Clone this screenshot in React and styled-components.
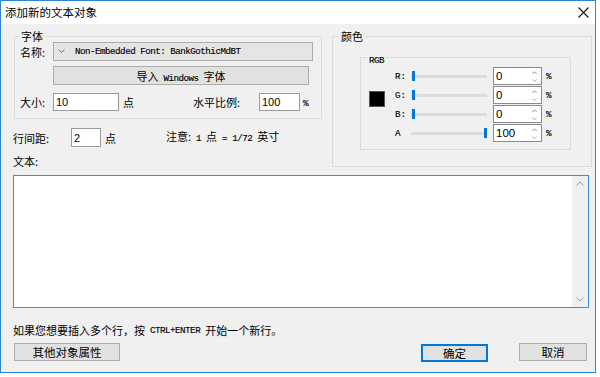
import React from 'react'
import styled, { createGlobalStyle } from 'styled-components'

const GlobalStyle = createGlobalStyle`
  html, body { margin: 0; padding: 0; background: #fff; }
  body {
    width: 600px; height: 377px; overflow: hidden;
    font-family: "Noto Sans CJK SC", "Liberation Sans", sans-serif;
    font-size: 11px; color: #000;
  }
`

const Window = styled.div`
  width: 596px;
  height: 373px;
  box-sizing: border-box;
  border: 1px solid #2c86d6;
  display: flex;
  flex-direction: column;
  background: #f0f0f0;
`
const TitleBar = styled.div`
  height: 23px;
  flex-shrink: 0;
  background: #fff;
  display: flex;
  align-items: center;
  justify-content: space-between;
  padding: 0 6px 1px 4px;
  box-sizing: border-box;
  font-size: 11.5px;
`
const Body = styled.div`
  flex: 1;
  padding: 6px 2px 0 12px;
  display: flex;
  flex-direction: column;
`
const Top = styled.div`
  display: flex;
  align-items: flex-start;
`
const LeftCol = styled.div`
  width: 309px;
  display: flex;
  flex-direction: column;
`
const Group = styled.div`
  position: relative;
  box-sizing: border-box;
  border: 1px solid #dcdcdc;
  margin-top: 6px;
  width: ${p => p.$w}px;
  height: ${p => p.$h}px;
  margin-left: ${p => p.$ml || 0}px;
  padding: ${p => p.$pad};
`
const Legend = styled.span`
  position: absolute;
  top: ${p => p.$mono ? -7 : -8}px;
  left: ${p => p.$left || 5}px;
  padding: 0 1px;
  background: #f0f0f0;
  line-height: 14px;
`
const Row = styled.div`
  display: flex;
  align-items: center;
  height: ${p => p.$h || 19}px;
  margin-top: ${p => p.$mt || 0}px;
  padding-left: ${p => p.$pl || 0}px;
`
const Label = styled.span`
  width: ${p => p.$w}px;
  margin-left: ${p => p.$ml || 0}px;
  flex-shrink: 0;
  line-height: 14px;
`
const Unit = styled.span`
  margin-left: ${p => p.$ml || 4}px;
  line-height: 14px;
  white-space: pre;
`
const Mono = styled.span`
  font-family: "Liberation Mono", "Courier New", monospace;
  font-size: 9.2px;
  letter-spacing: -0.5px;
  white-space: pre;
  -webkit-text-stroke: 0.15px #000;
`
const Cjk = styled.span`
  font-family: "Noto Sans CJK SC", sans-serif;
  font-size: 11px;
  letter-spacing: 0;
  -webkit-text-stroke: 0;
`
const Gap = styled.span`
  display: inline-block;
  width: ${p => p.$w}px;
`
const Select = styled.div`
  flex: 1;
  height: 19px;
  box-sizing: border-box;
  border: 1px solid #acacac;
  background: #e5e5e5;
  display: flex;
  align-items: center;
  padding-left: 4px;
  gap: 10px;
`
const Button = styled.div`
  width: ${p => p.$w}px;
  height: ${p => p.$h || 18}px;
  margin-left: ${p => p.$ml || 0}px;
  margin-top: ${p => p.$mt || 0}px;
  box-sizing: border-box;
  border: 1px solid ${p => p.$primary ? '#0078d7' : '#adadad'};
  box-shadow: ${p => p.$primary ? 'inset 0 0 0 1px #0078d7' : 'none'};
  background: #e1e1e1;
  display: flex;
  align-items: center;
  justify-content: center;
  font-size: 11.5px;
  flex-shrink: 0;
`
const Input = styled.div`
  width: ${p => p.$w}px;
  height: ${p => p.$h || 18}px;
  box-sizing: border-box;
  border: 1px solid #9a9a9a;
  background: #fff;
  padding-left: 2px;
  display: flex;
  align-items: center;
  font-family: "Liberation Sans", sans-serif;
  font-size: 11px;
  flex-shrink: 0;
`
const RgbBox = styled.div`
  position: relative;
  box-sizing: border-box;
  width: 211px;
  height: 93px;
  border: 1px solid #dcdcdc;
  padding: 9px 0 0 8px;
  display: flex;
`
const Swatch = styled.div`
  width: 16px;
  height: 16px;
  margin-top: 24px;
  background: #000;
  border: 1px solid #555;
  box-sizing: border-box;
  flex-shrink: 0;
`
const Channels = styled.div`
  margin-left: 10px;
  display: flex;
  flex-direction: column;
  gap: 1px;
`
const ChannelRow = styled.div`
  display: flex;
  align-items: center;
  height: 18px;
`
const ChLabel = styled(Mono)`
  width: 16px;
  letter-spacing: 0;
`
const Slider = styled.div`
  position: relative;
  width: 76px;
  height: 12px;
  margin-right: 6px;
  display: flex;
  align-items: center;
`
const Track = styled.div`
  width: 100%;
  height: 3px;
  background: #dcdcdc;
`
const Thumb = styled.div`
  position: absolute;
  top: 1px;
  width: 3px;
  height: 10px;
  background: #0078d7;
`
const Spin = styled.div`
  width: 49px;
  height: 18px;
  box-sizing: border-box;
  border: 1px solid #8a8a8a;
  background: #fff;
  display: flex;
  font-family: "Liberation Sans", sans-serif;
  font-size: 11.5px;
`
const SpinValue = styled.div`
  flex: 1;
  padding-left: 2px;
  display: flex;
  align-items: center;
`
const SpinArrows = styled.div`
  width: 13px;
  display: flex;
  flex-direction: column;
  align-items: center;
  justify-content: space-between;
  padding: 3px 0 2px;
  box-sizing: border-box;
`
const Percent = styled(Mono)`
  margin-left: 4px;
`
const TextBox = styled.div`
  margin-top: 7px;
  margin-right: 4px;
  height: 133px;
  box-sizing: border-box;
  border: 1px solid #3c8ed8;
  background: #fff;
  display: flex;
  justify-content: flex-end;
`
const ScrollBar = styled.div`
  width: 16px;
  background: #f0f0f0;
  display: flex;
  flex-direction: column;
  align-items: center;
  justify-content: space-between;
  padding: 5px 0 5px;
`
const Help = styled.div`
  margin-top: 15px;
  line-height: 15px;
  display: flex;
  align-items: center;
  white-space: pre;
`
const Footer = styled.div`
  margin-top: 5px;
  display: flex;
  align-items: flex-start;
  padding-left: 1px;
`

const Chevron = ({ up, color = '#9a9a9a', w = 8 }) => (
  <svg width={w} height={w / 2 + 1} viewBox="0 0 8 5">
    <path d={up ? 'M0.5 4.5 L4 1 L7.5 4.5' : 'M0.5 0.5 L4 4 L7.5 0.5'} fill="none" stroke={color} strokeWidth="1" />
  </svg>
)

const channels = [
  { name: 'R:', value: 0 },
  { name: 'G:', value: 0 },
  { name: 'B:', value: 0 },
  { name: 'A', value: 100 },
]

export default function App() {
  return (
    <>
      <GlobalStyle />
      <Window>
        <TitleBar>
          <span>添加新的文本对象</span>
          <svg width="11" height="11" viewBox="0 0 11 11">
            <path d="M0.5 0.5 L10.5 10.5 M10.5 0.5 L0.5 10.5" stroke="#111" strokeWidth="1.1" />
          </svg>
        </TitleBar>
        <Body>
          <Top>
            <LeftCol>
              <Group $w={308} $h={83} $ml={1} $pad="5px 8px 0 5px">
                <Legend>字体</Legend>
                <Row>
                  <Label $w={33}>名称:</Label>
                  <Select>
                    <Chevron color="#666" w={7} />
                    <Mono>Non-Embedded Font: BankGothicMdBT</Mono>
                  </Select>
                </Row>
                <Row $mt={5} $pl={33}>
                  <Button $w={256} $h={19}>
                    <Mono><Cjk>导入</Cjk> Windows <Cjk>字体</Cjk></Mono>
                  </Button>
                </Row>
                <Row $mt={8} $h={18}>
                  <Label $w={33}>大小:</Label>
                  <Input $w={66}>10</Input>
                  <Unit>点</Unit>
                  <Label $w={66} $ml={59}>水平比例:</Label>
                  <Input $w={41}>100</Input>
                  <Unit $ml={3}><Mono>%</Mono></Unit>
                </Row>
              </Group>
              <Row $mt={9}>
                <Label $w={58}>行间距:</Label>
                <Input $w={30} $h={19}>2</Input>
                <Unit>点</Unit>
                <Unit $ml={50}>
                  注意:<Gap $w={5} /><Mono>1 </Mono>点<Mono> = 1/72 </Mono>英寸
                </Unit>
              </Row>
              <Row $mt={7} $h={14}>
                <Label $w={40}>文本:</Label>
              </Row>
            </LeftCol>
            <Group $w={260} $h={131} $ml={10} $pad="20px 0 0 27px">
              <Legend $left={7}>颜色</Legend>
              <RgbBox>
                <Legend $left={7} $mono><Mono>RGB</Mono></Legend>
                <Swatch />
                <Channels>
                  {channels.map(c => (
                    <ChannelRow key={c.name}>
                      <ChLabel>{c.name}</ChLabel>
                      <Slider>
                        <Track />
                        <Thumb style={{ left: 1 + (c.value / 100) * 72 }} />
                      </Slider>
                      <Spin>
                        <SpinValue>{c.value}</SpinValue>
                        <SpinArrows>
                          <Chevron up color="#555" w={5} />
                          <Chevron color="#777" w={5} />
                        </SpinArrows>
                      </Spin>
                      <Percent>%</Percent>
                    </ChannelRow>
                  ))}
                </Channels>
              </RgbBox>
            </Group>
          </Top>
          <TextBox>
            <ScrollBar>
              <Chevron up />
              <Chevron />
            </ScrollBar>
          </TextBox>
          <Help>
            如果您想要插入多个行，按<Mono> CTRL+ENTER </Mono>开始一个新行。
          </Help>
          <Footer>
            <Button $w={106}>其他对象属性</Button>
            <Button $w={67} $ml={301} $mt={1} $primary>确定</Button>
            <Button $w={68} $ml={31}>取消</Button>
          </Footer>
        </Body>
      </Window>
    </>
  )
}
